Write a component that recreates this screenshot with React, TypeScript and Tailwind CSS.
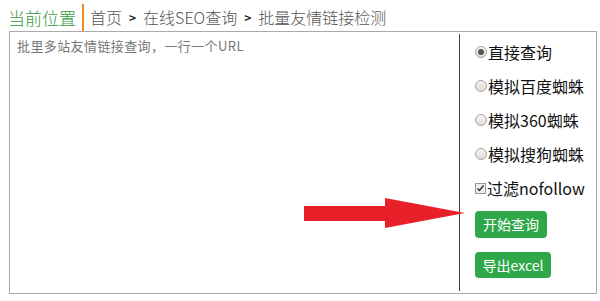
import React from 'react';

const OPTIONS = ['直接查询', '模拟百度蜘蛛', '模拟360蜘蛛', '模拟搜狗蜘蛛'];

const Radio: React.FC<{ checked?: boolean }> = ({ checked }) => (
  <span className="w-[12px] h-[12px] rounded-full border border-[#a6a6a6] bg-gradient-to-b from-[#f4f4f4] to-[#dcdcdc] flex items-center justify-center shrink-0">
    {checked && <span className="w-[6px] h-[6px] rounded-full bg-[#555]" />}
  </span>
);

export default function App() {
  return (
    <div className="relative w-[600px] h-[301px] bg-white font-['Noto_Sans_CJK_SC','Noto_Sans',sans-serif] overflow-hidden">
      {/* Breadcrumb */}
      <div className="flex items-stretch h-[27px] mt-[4px] pl-[8px]">
        <span className="text-[17px] leading-[27px] text-[#2f9a3c] font-light pr-[6px]">当前位置</span>
        <span className="w-[2px] bg-[#f08a24] mr-[6px]" />
        <span className="text-[16px] leading-[27px] text-[#555] font-light flex items-center gap-[7px]">
          首页
          <span className="text-[12px] text-[#222] font-bold">&gt;</span>
          <span>在线SEO查询</span>
          <span className="text-[12px] text-[#222] font-bold">&gt;</span>
          批量友情链接检测
        </span>
      </div>

      {/* Main box */}
      <div className="absolute left-[9px] top-[31px] w-[588px] h-[263px] border border-[#aaa] flex">
        <div className="w-[450px] my-[2px] border-r border-[#444] pl-[7px] leading-[20px]">
          <span className="text-[13px] text-[#777] font-['Noto_Sans_CJK_SC',serif] tracking-[0.4px]">
            批里多站友情链接查询，一行一个URL
          </span>
        </div>
        <div className="flex flex-col pl-[15px] pt-[3px]">
          {OPTIONS.map((o, i) => (
            <div key={o} className="h-[34px] flex items-center gap-[1px] text-[16px] text-[#111]">
              <Radio checked={i === 0} />
              <span>{o}</span>
            </div>
          ))}
          <div className="h-[34px] flex items-center gap-[1px] text-[16px] text-[#111]">
            <span className="w-[11px] h-[11px] border border-[#999] bg-[#eee] flex items-center justify-center shrink-0">
              <svg width="9" height="9" viewBox="0 0 9 9">
                <path d="M1.5 4.5 L3.5 6.5 L7.5 1.5" stroke="#333" strokeWidth="1.5" fill="none" />
              </svg>
            </span>
            <span>过滤nofollow</span>
          </div>
          <button className="mt-[6px] w-[72px] h-[27px] rounded-[4px] bg-[#2fa84a] text-white text-[14px] leading-[27px] text-center">
            开始查询
          </button>
          <button className="mt-[14px] w-[76px] h-[26px] rounded-[4px] bg-[#2fa84a] text-white text-[14px] leading-[26px] text-center">
            导出excel
          </button>
        </div>
      </div>

      {/* Red arrow overlay */}
      <svg className="absolute left-0 top-0 pointer-events-none" width="600" height="301">
        <polygon points="304,206 385,206 385,198 465,213 385,228 385,221 304,221" fill="#e8202a" />
      </svg>
    </div>
  );
}
